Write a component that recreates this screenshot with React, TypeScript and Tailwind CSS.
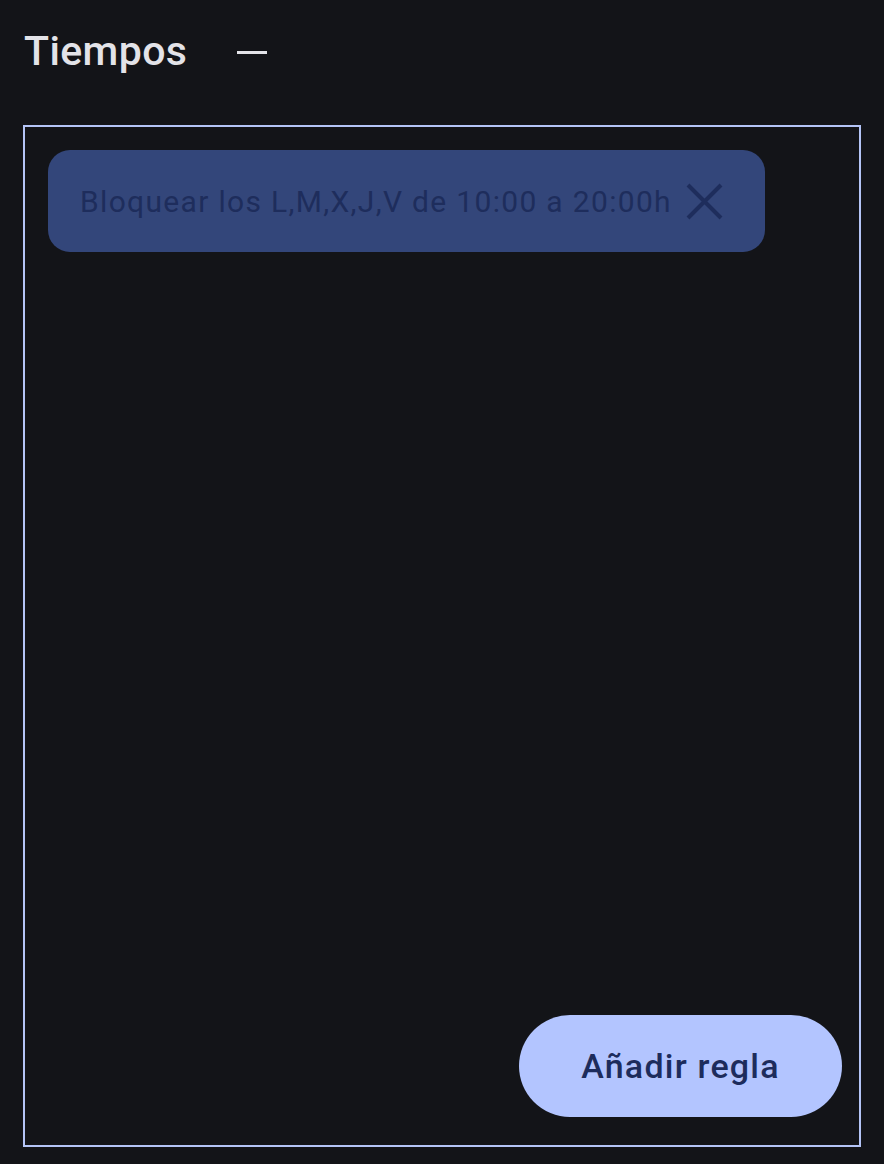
export default function App() {
  return (
    <div
      className="w-[884px] h-[1164px] bg-[#131418] flex flex-col px-[23px] pb-[17px]"
      style={{ fontFamily: "Roboto, 'Noto Sans', sans-serif" }}
    >
      {/* Header */}
      <div className="flex items-center h-[106px] pb-[4px]">
        <h1 className="text-[41px] leading-none font-medium tracking-[0.4px] text-[#e3e3e8] pl-[1px]">Tiempos</h1>
        <div className="ml-[50px] w-[30px] h-[3px] bg-[#e3e3e8] mt-[2px]" />
      </div>

      {/* Rules box */}
      <div className="mt-[19px] flex-1 border-2 border-[#b4c4f6] flex flex-col p-[23px] pr-[17px] pb-[28px]">
        <div className="self-start flex items-center w-[717px] h-[102px] rounded-[22px] bg-[#33467a] pl-[32px]">
          <span className="text-[30px] text-[#1e2d5c] tracking-[1.32px] whitespace-nowrap">
            Bloquear los L,M,X,J,V de 10:00 a 20:00h
          </span>
          <svg className="ml-[14px] w-[37px] h-[37px]" viewBox="0 0 37 37" fill="none">
            <path d="M2 2 L35 35 M35 2 L2 35" stroke="#1e2d5c" strokeWidth="4" />
          </svg>
        </div>

        <div className="flex-1" />

        <div className="self-end">
          <button className="w-[323px] h-[102px] rounded-full bg-[#b3c5ff] text-[34px] font-medium tracking-[1.2px] text-[#1d2c5c]">
            Añadir regla
          </button>
        </div>
      </div>
    </div>
  );
}
